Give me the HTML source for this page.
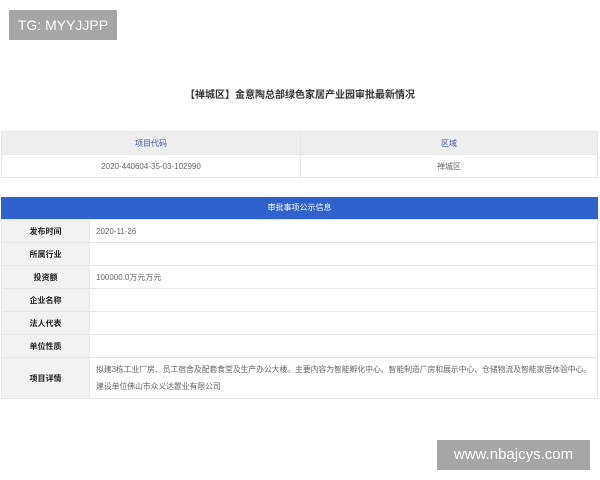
<!DOCTYPE html>
<html><head><meta charset="utf-8"><style>
body{margin:0;width:600px;height:480px;background:#fff;position:relative;overflow:hidden;font-family:"Liberation Sans","Noto Sans CJK SC",sans-serif;}
.abs{position:absolute;}
.tg{left:9px;top:10px;width:108px;height:30px;background:#a6a6a6;color:#fff;font-size:14px;line-height:30px;text-align:center;}
.wm{left:437px;top:440px;width:153px;height:30px;background:#a6a6a6;color:#fff;font-size:15px;line-height:30px;text-align:center;}
.title{left:0;width:600px;top:86px;text-align:center;font-size:10px;font-weight:bold;color:#333;}
table{border-collapse:collapse;position:absolute;left:1px;width:597px;font-size:8px;color:#666;}
td{border:1px solid #e6e6e6;padding:0;}
.t1 td{text-align:center;height:22px;}
.t1 .h td{background:#eee;color:#3a57b8;}
.blue{left:1px;top:197px;width:597px;height:22px;background:#2f62cc;color:#fff;font-size:8px;line-height:22px;text-align:center;}
.t2 td{height:22px;}
.t2 td.l{width:87px;background:#f2f2f2;text-align:center;font-weight:bold;color:#222;}
.t2 td.v{padding-left:6px;}
</style></head><body>
<div class="abs tg">TG: MYYJJPP</div>
<div class="abs title">【禅城区】金意陶总部绿色家居产业园审批最新情况</div>
<table class="t1" style="top:131px">
<tr class="h"><td style="width:298px">项目代码</td><td>区域</td></tr>
<tr><td>2020-440604-35-03-102990</td><td>禅城区</td></tr>
</table>
<div class="abs blue">审批事项公示信息</div>
<table class="t2" style="top:219px">
<tr><td class="l">发布时间</td><td class="v">2020-11-26</td></tr>
<tr><td class="l">所属行业</td><td class="v"></td></tr>
<tr><td class="l">投资额</td><td class="v">100000.0万元万元</td></tr>
<tr><td class="l">企业名称</td><td class="v"></td></tr>
<tr><td class="l">法人代表</td><td class="v"></td></tr>
<tr><td class="l">单位性质</td><td class="v"></td></tr>
<tr><td class="l" style="height:40px">项目详情</td><td class="v" style="line-height:17px;font-size:7.9px;white-space:nowrap;letter-spacing:-0.1px">拟建3栋工业厂房、员工宿舍及配套食堂及生产办公大楼。主要内容为智能孵化中心、智能制造厂房和展示中心、仓储物流及智能家居体验中心。<br>建设单位佛山市众义达置业有限公司</td></tr>
</table>
<div class="abs wm">www.nbajcys.com</div>
</body></html>
